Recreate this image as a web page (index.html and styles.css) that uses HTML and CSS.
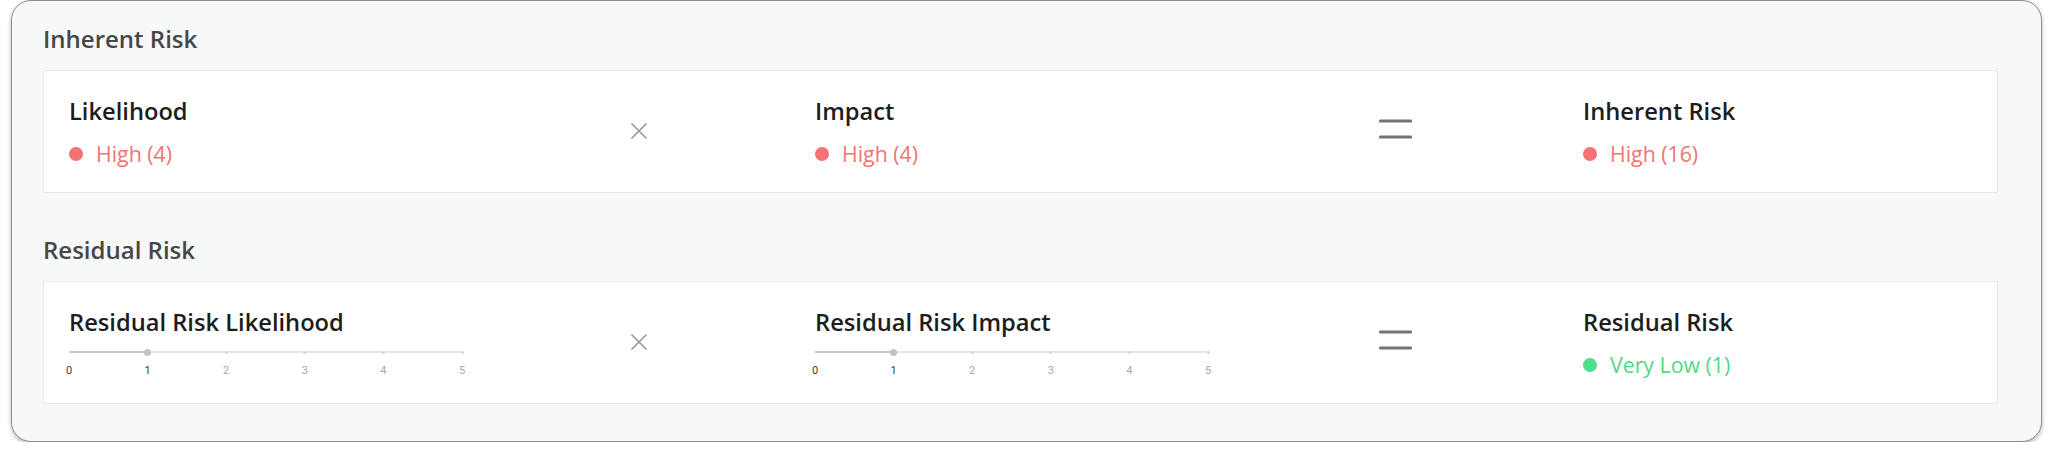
FILE: index.html
```html
<!DOCTYPE html>
<html lang="en">
<head>
<meta charset="utf-8">
<title>Risk</title>
<link rel="stylesheet" href="styles.css">
</head>
<body>
<div class="panel">
  <h2 class="section-title">Inherent Risk</h2>
  <div class="card">
    <div class="field">
      <div class="field-title">Likelihood</div>
      <div class="value high"><span class="dot"></span>High (4)</div>
    </div>
    <div class="op">
      <svg class="times" width="18" height="18" viewBox="0 0 18 18"><path d="M1.5 1.5L16.5 16.5M16.5 1.5L1.5 16.5" stroke="#9b9b9b" stroke-width="1.7" fill="none"/></svg>
    </div>
    <div class="field">
      <div class="field-title">Impact</div>
      <div class="value high"><span class="dot"></span>High (4)</div>
    </div>
    <div class="op">
      <svg class="equals" width="33" height="20" viewBox="0 0 33 20"><rect x="0" y="0.5" width="33" height="3" rx="1.2" fill="#747474"/><rect x="0" y="16.5" width="33" height="3" rx="1.2" fill="#747474"/></svg>
    </div>
    <div class="field">
      <div class="field-title">Inherent Risk</div>
      <div class="value high"><span class="dot"></span>High (16)</div>
    </div>
  </div>

  <h2 class="section-title second">Residual Risk</h2>
  <div class="card">
    <div class="field">
      <div class="field-title">Residual Risk Likelihood</div>
      <div class="slider">
        <div class="rail">
          <div class="track" style="width: 20%"></div>
          <span class="tick t2"></span><span class="tick t3"></span><span class="tick t4"></span><span class="tick t5"></span>
          <span class="thumb" style="left: 20%"></span>
        </div>
        <div class="marks">
          <span class="mark active"><span>0</span></span>
          <span class="mark active"><span>1</span></span>
          <span class="mark"><span>2</span></span>
          <span class="mark"><span>3</span></span>
          <span class="mark"><span>4</span></span>
          <span class="mark"><span>5</span></span>
        </div>
      </div>
    </div>
    <div class="op">
      <svg class="times" width="18" height="18" viewBox="0 0 18 18"><path d="M1.5 1.5L16.5 16.5M16.5 1.5L1.5 16.5" stroke="#9b9b9b" stroke-width="1.7" fill="none"/></svg>
    </div>
    <div class="field">
      <div class="field-title">Residual Risk Impact</div>
      <div class="slider">
        <div class="rail">
          <div class="track" style="width: 20%"></div>
          <span class="tick t2"></span><span class="tick t3"></span><span class="tick t4"></span><span class="tick t5"></span>
          <span class="thumb" style="left: 20%"></span>
        </div>
        <div class="marks">
          <span class="mark active"><span>0</span></span>
          <span class="mark active"><span>1</span></span>
          <span class="mark"><span>2</span></span>
          <span class="mark"><span>3</span></span>
          <span class="mark"><span>4</span></span>
          <span class="mark"><span>5</span></span>
        </div>
      </div>
    </div>
    <div class="op">
      <svg class="equals" width="33" height="20" viewBox="0 0 33 20"><rect x="0" y="0.5" width="33" height="3" rx="1.2" fill="#747474"/><rect x="0" y="16.5" width="33" height="3" rx="1.2" fill="#747474"/></svg>
    </div>
    <div class="field">
      <div class="field-title">Residual Risk</div>
      <div class="value low"><span class="dot"></span>Very Low (1)</div>
    </div>
  </div>
</div>
</body>
</html>
```
FILE: styles.css
```css
html, body {
  margin: 0;
  padding: 0;
  background: #ffffff;
}

body {
  font-family: "Open Sans", "Noto Sans", sans-serif;
  padding: 0 6px 0 11px;
}

.panel {
  background: #f7f8f8;
  border: 1px solid #8e8e8e;
  border-radius: 20px;
  box-shadow: 0 2px 4px rgba(0, 0, 0, 0.28);
  padding: 21px 43px 37px 31px;
}

.section-title {
  margin: 0 0 15px 0;
  font-size: 24px;
  line-height: 33px;
  font-weight: 600;
  color: #474747;
}

.section-title.second {
  margin-top: 40px;
}

.card {
  background: #ffffff;
  border: 1px solid #e6e9e9;
  padding: 24px 25px 24px 25px;
  display: grid;
  grid-template-columns: 393px 353px 393px 375px 1fr;
}

.field {
  display: flex;
  flex-direction: column;
  min-width: 0;
}

.field-title {
  font-size: 23.7px;
  line-height: 33px;
  font-weight: 600;
  color: #1d1d1d;
}

.value {
  margin-top: 11px;
  font-size: 21.3px;
  line-height: 29px;
  display: flex;
  align-items: center;
}

.value .dot {
  width: 14px;
  height: 14px;
  border-radius: 50%;
  margin-right: 13px;
  flex: none;
}

.value.high { color: #f37373; }
.value.high .dot { background: #f47272; }
.value.low { color: #4dd98a; }
.value.low .dot { background: #4fdc8b; }

.op {
  display: flex;
  align-items: center;
  justify-content: center;
}

.op .times {
  margin-bottom: 2px;
}

.op .equals {
  margin-bottom: 5px;
}

.slider {
  width: 393px;
  margin-top: 9px;
}

.rail {
  position: relative;
  height: 8px;
}

.rail::before {
  content: "";
  position: absolute;
  left: 0;
  right: 0;
  top: 3px;
  height: 2px;
  background: #e6e6e6;
}

.track {
  position: absolute;
  left: 0;
  top: 3px;
  height: 2px;
  background: #c6c6c6;
}

.tick {
  position: absolute;
  top: 2.5px;
  width: 3px;
  height: 3px;
  margin-left: -1.5px;
  border-radius: 50%;
  background: #d4d4d4;
}
.tick.t2 { left: 40%; }
.tick.t3 { left: 60%; }
.tick.t4 { left: 80%; }
.tick.t5 { left: 100%; }

.thumb {
  position: absolute;
  top: 0.5px;
  width: 7px;
  height: 7px;
  margin-left: -3.5px;
  border-radius: 50%;
  background: #c2c2c2;
}

.marks {
  margin-top: 7px;
  display: flex;
  justify-content: space-between;
  font-family: Roboto, "Liberation Sans", sans-serif;
  font-size: 11px;
  line-height: 16px;
  color: #a8a8a8;
}

.mark {
  width: 0;
  display: flex;
  justify-content: center;
  white-space: nowrap;
}

.mark.active {
  color: #3d3d3d;
}
```
